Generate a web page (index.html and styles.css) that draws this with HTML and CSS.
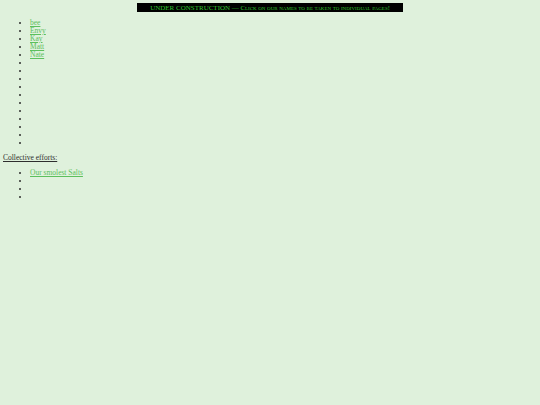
FILE: index.html
```html
<!DOCTYPE html>
<html>
<head>
<meta charset="utf-8">
<link rel="stylesheet" href="styles.css">
</head>
<body>
<div class="banner-wrap">
  <div class="banner">UNDER CONSTRUCTION — <span class="sc">Click on our names to be taken to individual pages!</span></div>
</div>
<ul class="list members">
  <li><a href="#">bee</a></li>
  <li><a href="#">Envy</a></li>
  <li><a href="#">Kay</a></li>
  <li><a href="#">Matt</a></li>
  <li><a href="#">Nate</a></li>
  <li></li><li></li><li></li><li></li><li></li><li></li>
  <li></li><li></li><li></li><li></li><li></li>
</ul>
<p class="heading">Collective efforts:</p>
<ul class="list collective">
  <li><a href="#">Our smolest Salts</a></li>
  <li></li><li></li><li></li>
</ul>
</body>
</html>
```

FILE: styles.css
```css
html, body {
  margin: 0;
  padding: 0;
  background: #dff1dc;
}
body {
  padding: 3px 3px;
  font-family: "Liberation Serif", "Times New Roman", serif;
  font-size: 7.5px;
  line-height: 8px;
  color: #2e2e2e;
}
.banner-wrap {
  display: flex;
  justify-content: center;
}
.banner {
  width: 266px;
  height: 9px;
  background: #000;
  color: #2fc52f;
  text-align: center;
  line-height: 9px;
  font-size: 7px;
}
.sc {
  font-variant: small-caps;
  font-size: 6.5px;
}
.list {
  margin: 7px 0 0 0;
  padding-left: 27px;
}
.list li {
  height: 8px;
  line-height: 8px;
}
.list a {
  color: #5cc05c;
  text-decoration: underline;
}
.heading {
  margin: 7px 0 0 0;
  text-decoration: underline;
}
.collective {
  margin-top: 7px;
}
```
